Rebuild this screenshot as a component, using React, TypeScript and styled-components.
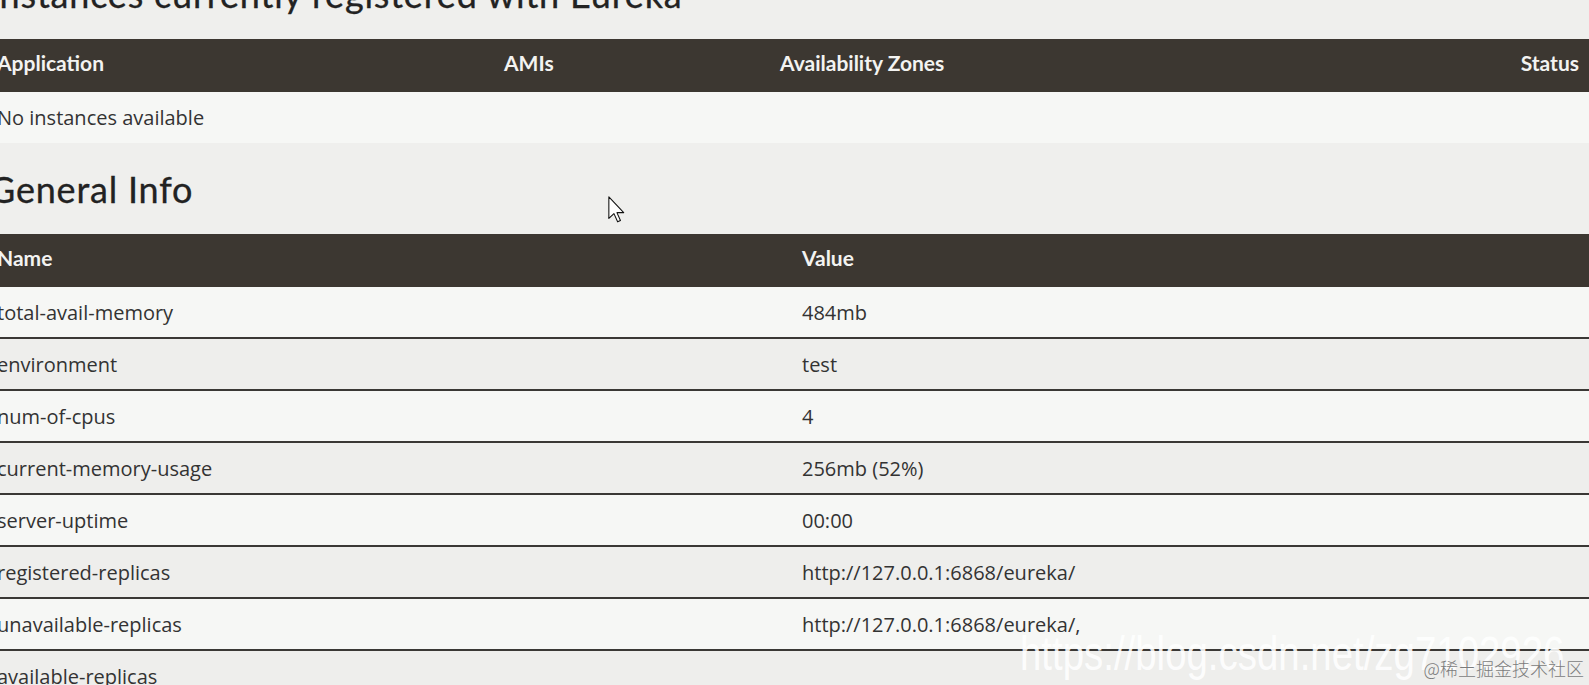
import React from "react";
import styled, { createGlobalStyle } from "styled-components";

const GlobalStyle = createGlobalStyle`
  html, body {
    margin: 0;
    padding: 0;
    background: #efefed;
    overflow: hidden;
  }
  body {
    font-family: "Open Sans", "Liberation Sans", sans-serif;
    color: #333;
  }
`;

const Page = styled.main`
  position: relative;
  width: 1600px;
  height: 685px;
  margin-left: -11px;
  overflow: hidden;
`;

const Heading = styled.h2<{ $first?: boolean }>`
  margin: ${(p) => (p.$first ? "-26px" : "26px")} 0 25px 0;
  font-family: Lato, "Open Sans", sans-serif;
  font-weight: 400;
  font-size: 36px;
  line-height: 40px;
  letter-spacing: 0.8px;
  color: #222;
  -webkit-text-stroke: 0.3px #222;
`;

const Table = styled.section`
  width: 100%;
`;

const HeadRow = styled.div<{ $cols: string }>`
  display: grid;
  grid-template-columns: ${(p) => p.$cols};
  align-items: center;
  box-sizing: border-box;
  height: 53px;
  padding-bottom: 6px;
  background: #3c3731;
  color: #f3f3f1;
  font-family: Lato, "Open Sans", sans-serif;
  font-weight: 700;
  font-size: 21px;
`;

const HeadCell = styled.div<{ $right?: boolean }>`
  padding: 0 ${(p) => (p.$right ? "10px" : "8px")} 0 8px;
  text-align: ${(p) => (p.$right ? "right" : "left")};
  white-space: nowrap;
`;

const BodyRow = styled.div<{ $cols: string; $alt?: boolean; $plain?: boolean }>`
  display: grid;
  grid-template-columns: ${(p) => p.$cols};
  align-items: center;
  height: ${(p) => (p.$plain ? "51px" : "50px")};
  background: ${(p) => (p.$alt ? "#eeeeec" : "#f6f7f5")};
  border-bottom: ${(p) => (p.$plain ? "none" : "2px solid #3a3835")};
  font-size: 20px;
  color: #333;
`;

const Cell = styled.div<{ $span?: boolean }>`
  padding: 0 8px;
  white-space: nowrap;
  grid-column: ${(p) => (p.$span ? "1 / -1" : "auto")};
`;

const Cursor = styled.svg`
  position: absolute;
  left: 619px;
  top: 196px;
`;

const Watermark = styled.div`
  position: absolute;
  left: 1031px;
  top: 630px;
  font-family: "Liberation Sans", Arial, sans-serif;
  font-size: 48px;
  line-height: 48px;
  color: rgba(255, 255, 255, 0.88);
  white-space: nowrap;
  transform: scaleX(0.8);
  transform-origin: left top;
  pointer-events: none;
`;

const Credit = styled.div`
  position: absolute;
  right: 5px;
  top: 658px;
  font-family: "Noto Sans CJK SC", sans-serif;
  font-size: 18px;
  line-height: 20px;
  font-weight: 300;
  color: #7c7c7c;
  white-space: nowrap;
`;

const instCols = "507px 276px 1fr auto";
const infoCols = "805px 1fr";

const info: [string, string][] = [
  ["total-avail-memory", "484mb"],
  ["environment", "test"],
  ["num-of-cpus", "4"],
  ["current-memory-usage", "256mb (52%)"],
  ["server-uptime", "00:00"],
  ["registered-replicas", "http://127.0.0.1:6868/eureka/"],
  ["unavailable-replicas", "http://127.0.0.1:6868/eureka/,"],
  ["available-replicas", ""],
];

export default function App() {
  return (
    <>
      <GlobalStyle />
      <Page>
        <Heading $first>Instances currently registered with Eureka</Heading>
        <Table>
          <HeadRow $cols={instCols}>
            <HeadCell>Application</HeadCell>
            <HeadCell>AMIs</HeadCell>
            <HeadCell>Availability Zones</HeadCell>
            <HeadCell $right>Status</HeadCell>
          </HeadRow>
          <BodyRow $cols={instCols} $plain>
            <Cell $span>No instances available</Cell>
          </BodyRow>
        </Table>

        <Heading>General Info</Heading>
        <Table>
          <HeadRow $cols={infoCols}>
            <HeadCell>Name</HeadCell>
            <HeadCell>Value</HeadCell>
          </HeadRow>
          {info.map(([k, v], i) => (
            <BodyRow key={k} $cols={infoCols} $alt={i % 2 === 1}>
              <Cell>{k}</Cell>
              <Cell>{v}</Cell>
            </BodyRow>
          ))}
        </Table>

        <Cursor width="17" height="27" viewBox="0 0 12 19">
          <path
            d="M0.6 0.6 L0.6 15.8 L4.2 12.4 L6.8 18.2 L8.8 17.3 L6.3 11.7 L11.1 11.7 Z"
            fill="#ffffff"
            stroke="#111"
            strokeWidth="0.75"
            strokeLinejoin="round"
          />
        </Cursor>
        <Watermark>https://blog.csdn.net/zg7102926</Watermark>
        <Credit>@稀土掘金技术社区</Credit>
      </Page>
    </>
  );
}
